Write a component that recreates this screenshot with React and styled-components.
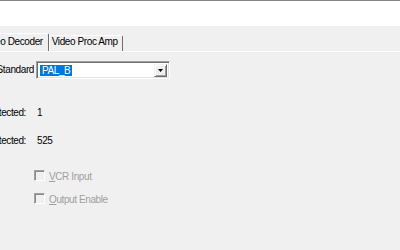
import React from "react";
import styled, { createGlobalStyle } from "styled-components";

const Global = createGlobalStyle`
  html, body { margin: 0; padding: 0; }
  body {
    width: 400px;
    height: 250px;
    overflow: hidden;
    background: #f0f0f0;
    font-family: "Liberation Sans", Arial, sans-serif;
    font-size: 10px;
    letter-spacing: -0.4px;
    color: #000;
  }
`;

const Page = styled.div`
  width: 400px;
  height: 250px;
  overflow: hidden;
  display: flex;
  flex-direction: column;
`;

const TopBar = styled.div`
  height: 25px;
  background: #fff;
  border-top: 1px solid #848484;
  flex: none;
`;

const TabStrip = styled.div`
  display: flex;
  align-items: flex-end;
  height: 25px;
  margin-left: -25px;
  flex: none;
`;

const Tab = styled.div`
  box-sizing: border-box;
  display: flex;
  align-items: flex-end;
  height: ${(p) => (p.$selected ? 18 : 16)}px;
  padding: 0 ${(p) => (p.$selected ? 5 : 4)}px 3px ${(p) => (p.$selected ? 6 : 2)}px;
  line-height: 12px;
  white-space: nowrap;
  border-top: 1px solid #fff;
  border-left: 1px solid #fff;
  border-right: 1px solid #6e6e6e;
  border-top-right-radius: 2px;
  background: #f0f0f0;
`;

const Panel = styled.div`
  flex: 1;
  border-top: 1px solid #fff;
  display: flex;
  flex-direction: column;
`;

const FieldRow = styled.div`
  display: flex;
  align-items: center;
  margin-top: ${(p) => p.$top}px;
  line-height: 12px;
`;

const ClipLabel = styled.div`
  width: ${(p) => p.$w}px;
  flex: none;
  display: flex;
  justify-content: flex-end;
  overflow: hidden;
  white-space: nowrap;
`;

const Value = styled.span`
  margin-left: 11px;
`;

const Combo = styled.div`
  box-sizing: border-box;
  margin-left: 2px;
  width: 134px;
  height: 18px;
  background: #fff;
  border-style: solid;
  border-width: 1px;
  border-color: #a0a0a0 #fff #fff #a0a0a0;
  box-shadow: inset 1px 1px 0 #6e6e6e, inset -1px -1px 0 #e3e3e3;
  display: flex;
  align-items: center;
  padding: 0 2px 0 3px;
`;

const Selection = styled.span`
  background: #0078d7;
  color: #fff;
  padding: 0 2px;
  line-height: 11px;
  height: 11px;
`;

const DropButton = styled.div`
  box-sizing: border-box;
  margin-left: auto;
  width: 13px;
  height: 13px;
  background: #f0f0f0;
  border-style: solid;
  border-width: 1px;
  border-color: #f4f4f4 #6e6e6e #6e6e6e #f4f4f4;
  box-shadow: inset 1px 1px 0 #fff, inset -1px -1px 0 #a0a0a0;
  display: flex;
  align-items: center;
  justify-content: center;
  svg { display: block; }
`;

const CheckRow = styled.label`
  display: flex;
  align-items: center;
  margin-top: ${(p) => p.$top}px;
  padding-left: 34px;
  height: 11px;
  color: #a0a0a0;
  line-height: 12px;
`;

const CheckBox = styled.span`
  box-sizing: border-box;
  width: 11px;
  height: 11px;
  flex: none;
  border-style: solid;
  border-width: 1px;
  border-color: #a0a0a0 #fff #fff #a0a0a0;
  box-shadow: inset 1px 1px 0 #8a8a8a;
  background: #f0f0f0;
`;

const CheckText = styled.span`
  margin-left: 4px;
  padding-top: 2px;
  white-space: nowrap;
`;

const Mnemonic = styled.span`
  text-decoration: underline;
`;

export default function App() {
  return (
    <Page>
      <Global />
      <TopBar />
      <TabStrip>
        <Tab $selected>Video Decoder</Tab>
        <Tab>Video Proc Amp</Tab>
      </TabStrip>
      <Panel>
        <FieldRow $top={9}>
          <ClipLabel $w={34}>Video Standard</ClipLabel>
          <Combo>
            <Selection>PAL_B</Selection>
            <DropButton>
              <svg width="5" height="3" viewBox="0 0 5 3">
                <path d="M0 0H5L2.5 3Z" fill="#000" />
              </svg>
            </DropButton>
          </Combo>
        </FieldRow>
        <FieldRow $top={28}>
          <ClipLabel $w={26}>Signal Detected:</ClipLabel>
          <Value>1</Value>
        </FieldRow>
        <FieldRow $top={16}>
          <ClipLabel $w={26}>Lines Detected:</ClipLabel>
          <Value>525</Value>
        </FieldRow>
        <CheckRow $top={23}>
          <CheckBox />
          <CheckText>
            <Mnemonic>V</Mnemonic>CR Input
          </CheckText>
        </CheckRow>
        <CheckRow $top={12}>
          <CheckBox />
          <CheckText>
            <Mnemonic>O</Mnemonic>utput Enable
          </CheckText>
        </CheckRow>
      </Panel>
    </Page>
  );
}
